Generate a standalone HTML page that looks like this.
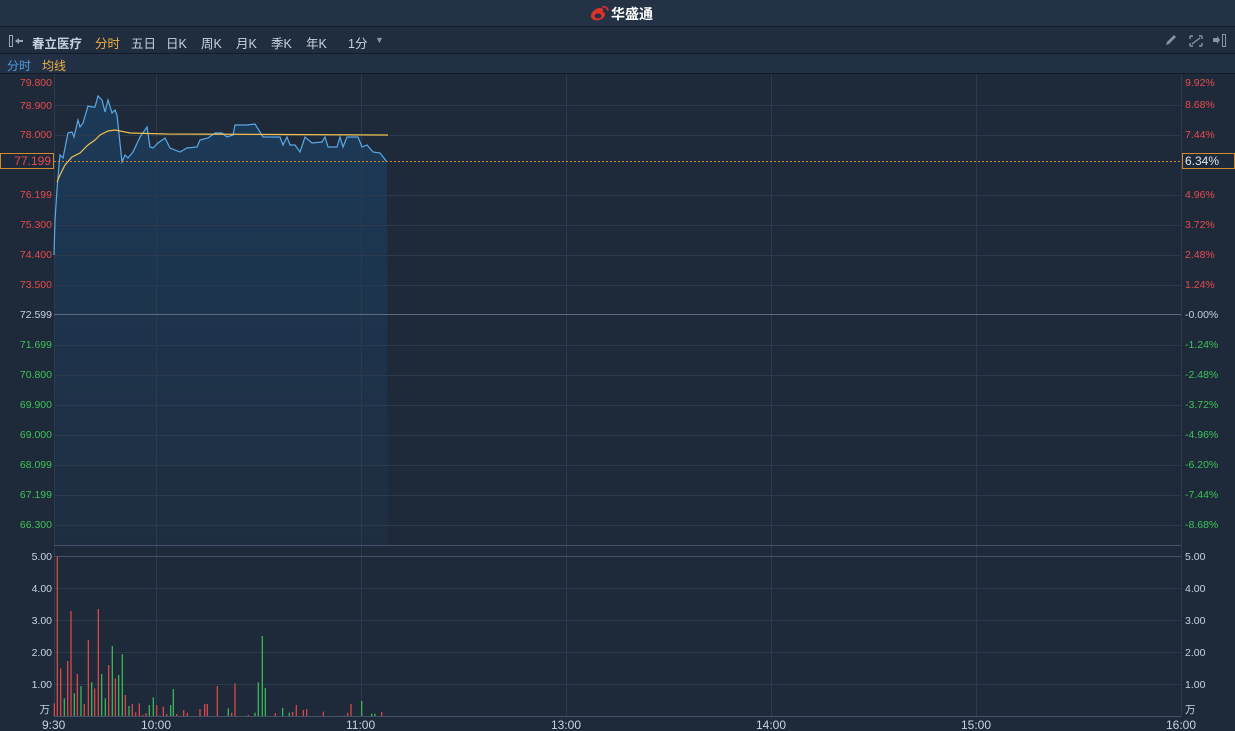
<!DOCTYPE html><html><head><meta charset="utf-8"><style>
body{margin:0;width:1235px;height:731px;background:#1e2939;font-family:"Liberation Sans","Noto Sans CJK SC",sans-serif;overflow:hidden;position:relative}
.top{position:absolute;left:0;top:0;width:1235px;height:26px;background:#243246;border-bottom:1px solid #121b27}
.tb{position:absolute;left:0;top:27px;width:1235px;height:26px;background:#202d3f;border-bottom:1px solid #121b27;font-size:12.5px;color:#c9d3df}
.tb span{position:absolute;top:6px}
.sb{position:absolute;left:0;top:54px;width:1235px;height:19px;background:#223046;border-bottom:1px solid #121b27;font-size:12px}
</style></head><body>
<div class="top"><svg style="position:absolute;left:588px;top:4px" width="22" height="18" viewBox="0 0 22 18"><path d="M3 12c0-4 5-8 9-8 4 0 4 3 2 4 3 0 4 2 2 5-2 3-7 4-10 3-2-1-3-2-3-4z" fill="#e0302a"/><ellipse cx="10" cy="12" rx="3.5" ry="2.5" fill="#243246"/><path d="M14 3c3-1 6 1 6 4" stroke="#e0302a" stroke-width="1.5" fill="none"/></svg><span style="position:absolute;left:611px;top:4px;color:#fff;font-weight:bold;font-size:14px">华盛通</span></div>
<div class="tb">
<svg style="position:absolute;left:9px;top:8px" width="16" height="12"><rect x="0.5" y="0.5" width="3" height="11" fill="none" stroke="#9aa6b4"/><path d="M6 6l4-3v6z M9 5h5v2h-5z" fill="#9aa6b4"/></svg>
<span style="left:32px;font-weight:bold">春立医疗</span><span style="left:95px;color:#f0b040">分时</span><span style="left:131px">五日</span><span style="left:166px">日K</span><span style="left:201px">周K</span><span style="left:236px">月K</span><span style="left:271px">季K</span><span style="left:306px">年K</span><span style="left:348px">1分</span><span style="left:375px;top:8px;color:#8894a3;font-size:9px">▼</span>
<svg style="position:absolute;left:1164px;top:6px" width="66" height="15"><path d="M2 12l1-3 7-7 2 2-7 7z" fill="#8894a3"/><path d="M26 3h3M26 3v3M38 3h-3M38 3v3M26 13h3M26 13v-3M38 13h-3M38 13v-3M28 11l8-6" stroke="#8894a3" stroke-width="1.4" fill="none"/><path d="M49 5h4v-2l3 4-3 4v-2h-4z" fill="#8894a3"/><rect x="58.5" y="1.5" width="3" height="12" fill="none" stroke="#8894a3"/></svg>
</div>
<div class="sb"><span style="position:absolute;left:7px;top:3px;color:#4d9de0">分时</span><span style="position:absolute;left:42px;top:3px;color:#f0b040">均线</span></div>
<svg style="position:absolute;left:0;top:0" width="1235" height="731">
<defs><linearGradient id="g" x1="0" y1="0" x2="0" y2="1"><stop offset="0" stop-color="#1b3a58"/><stop offset="1" stop-color="#1f2d40"/></linearGradient></defs>
<polygon fill="url(#g)" points="54,255 55,220 57,190 58,177 60,155 63,158 68,133 72,132 74,137 78,120 80,127 83,123 88,106 92,107 95,107 98,96 102,100 105,112 108,100 112,113 115,110 117,115 122,162 125,155 128,158 133,152 140,137 147,127 150,147 153,148 158,143 165,138 170,148 180,152 187,148 197,147 200,140 208,138 215,133 222,133 227,137 233,135 235,125 247,125 255,124 263,137 280,137 283,145 287,137 290,145 295,145 300,152 305,137 312,143 322,142 325,137 328,147 337,147 340,137 343,147 347,137 358,137 362,147 367,145 373,152 380,153 387,162 388,545 54,545"/>
<g stroke="#2c3a4d" stroke-width="1">
<path d="M54 105.5H1181M54 135.5H1181M54 195.5H1181M54 225.5H1181M54 255.5H1181M54 285.5H1181M54 345.5H1181M54 375.5H1181M54 405.5H1181M54 435.5H1181M54 465.5H1181M54 495.5H1181M54 525.5H1181M54 588.5H1181M54 620.5H1181M54 652.5H1181M54 684.5H1181"/>
<path d="M54.5 74V716M156.5 74V716M361.5 74V716M566.5 74V716M771.5 74V716M976.5 74V716M1181.5 74V716"/>
</g>
<path d="M54 545.5H1181M54 556.5H1181M54 716.5H1181" stroke="#44536a"/>
<path d="M54 314.5H1181" stroke="#5a6b82"/>
<polyline fill="none" stroke="#5aa9e6" stroke-width="1.2" points="54,255 55,220 57,190 58,177 60,155 63,158 68,133 72,132 74,137 78,120 80,127 83,123 88,106 92,107 95,107 98,96 102,100 105,112 108,100 112,113 115,110 117,115 122,162 125,155 128,158 133,152 140,137 147,127 150,147 153,148 158,143 165,138 170,148 180,152 187,148 197,147 200,140 208,138 215,133 222,133 227,137 233,135 235,125 247,125 255,124 263,137 280,137 283,145 287,137 290,145 295,145 300,152 305,137 312,143 322,142 325,137 328,147 337,147 340,137 343,147 347,137 358,137 362,147 367,145 373,152 380,153 387,162"/>
<polyline fill="none" stroke="#f0c050" stroke-width="1.2" points="57,182 60,175 65,165 72,157 80,153 88,145 95,140 100,135 108,131 115,130 120,131 130,133 167,134 388,135"/>
<path d="M54 161.5H1181" stroke="#d08a30" stroke-dasharray="2,2"/>
<g font-size="10.5" fill="#e84b4b" text-anchor="end">
<text x="52" y="86">79.800</text><text x="52" y="109">78.900</text><text x="52" y="138">78.000</text><text x="52" y="198">76.199</text><text x="52" y="228">75.300</text><text x="52" y="258">74.400</text><text x="52" y="288">73.500</text></g>
<text x="52" y="318" font-size="10.5" fill="#c9d3df" text-anchor="end">72.599</text>
<g font-size="10.5" fill="#3dc35a" text-anchor="end"><text x="52" y="348">71.699</text><text x="52" y="378">70.800</text><text x="52" y="408">69.900</text><text x="52" y="438">69.000</text><text x="52" y="468">68.099</text><text x="52" y="498">67.199</text><text x="52" y="528">66.300</text></g>
<g font-size="10.5" fill="#e84b4b"><text x="1185" y="86">9.92%</text><text x="1185" y="108">8.68%</text><text x="1185" y="138">7.44%</text><text x="1185" y="198">4.96%</text><text x="1185" y="228">3.72%</text><text x="1185" y="258">2.48%</text><text x="1185" y="288">1.24%</text></g>
<text x="1185" y="318" font-size="10.5" fill="#c9d3df">-0.00%</text>
<g font-size="10.5" fill="#3dc35a"><text x="1185" y="348">-1.24%</text><text x="1185" y="378">-2.48%</text><text x="1185" y="408">-3.72%</text><text x="1185" y="438">-4.96%</text><text x="1185" y="468">-6.20%</text><text x="1185" y="498">-7.44%</text><text x="1185" y="528">-8.68%</text></g>
<rect x="0.5" y="153.5" width="53" height="15" fill="#1e2939" stroke="#d08a30"/><text x="51" y="165" font-size="12" fill="#e84b4b" text-anchor="end">77.199</text>
<rect x="1182.5" y="153.5" width="52" height="15" fill="#1e2939" stroke="#d08a30"/><text x="1185" y="165" font-size="12" fill="#dfe6ee">6.34%</text>
<g font-size="10.5" fill="#c9d3df"><text x="52" y="560" text-anchor="end">5.00</text><text x="52" y="592" text-anchor="end">4.00</text><text x="52" y="624" text-anchor="end">3.00</text><text x="52" y="656" text-anchor="end">2.00</text><text x="52" y="688" text-anchor="end">1.00</text><text x="50" y="713" text-anchor="end">万</text>
<text x="1185" y="560">5.00</text><text x="1185" y="592">4.00</text><text x="1185" y="624">3.00</text><text x="1185" y="656">2.00</text><text x="1185" y="688">1.00</text><text x="1185" y="713">万</text>
<text x="42" y="729" font-size="12">9:30</text><text x="141" y="729" font-size="12">10:00</text><text x="346" y="729" font-size="12">11:00</text><text x="551" y="729" font-size="12">13:00</text><text x="756" y="729" font-size="12">14:00</text><text x="961" y="729" font-size="12">15:00</text><text x="1166" y="729" font-size="12">16:00</text></g>
<g id="v" stroke-width="1.2"></g>
</svg>
<script>
var d=[[163,490,'r'],[172,50,'r'],[182,385,'r'],[193,475,'g'],[203,363,'r'],[213,213,'r'],[223,460,'g'],[232,402,'r'],[243,438,'g'],[253,492,'r'],[265,300,'r'],[275,427,'g'],[284,445,'r'],[295,207,'r'],[305,402,'g'],[316,475,'g'],[326,375,'r'],[337,318,'g'],[346,415,'r'],[356,405,'g'],[367,343,'g'],[376,465,'r'],[387,498,'g'],[397,492,'r'],[407,517,'r'],[418,490,'r'],[428,525,'r'],[438,519,'r'],[448,495,'g'],[460,472,'g'],[470,495,'r'],[480,527,'g'],[490,500,'r'],[500,522,'r'],[512,495,'g'],[520,447,'g'],[530,522,'r'],[541,527,'g'],[551,510,'r'],[562,518,'r'],[600,507,'r'],[614,492,'r'],[622,492,'r'],[652,438,'r'],[673,528,'g'],[685,505,'g'],[695,518,'r'],[705,430,'r'],[715,528,'r'],[723,528,'r'],[735,528,'r'],[745,525,'r'],[765,518,'g'],[775,427,'g'],[787,288,'g'],[796,444,'g'],[826,519,'r'],[837,528,'r'],[848,504,'g'],[858,528,'r'],[868,518,'g'],[878,516,'r'],[889,495,'r'],[898,528,'g'],[910,510,'r'],[920,507,'r'],[940,528,'g'],[970,515,'r'],[1020,527,'r'],[1033,527,'g'],[1043,518,'r'],[1053,492,'r'],[1085,483,'g'],[1095,528,'r'],[1115,521,'g'],[1125,521,'g'],[1135,528,'r'],[1145,516,'r'],[1157,528,'g']];
var s='';d.forEach(function(b){var x=(b[0]/3).toFixed(1),t=540+b[1]/3;s+='<line x1="'+x+'" x2="'+x+'" y1="'+t+'" y2="716" stroke="'+(b[2]=='r'?'#e84b4b':'#3dc35a')+'"/>';});
document.getElementById('v').innerHTML=s;
</script>
</body></html>
